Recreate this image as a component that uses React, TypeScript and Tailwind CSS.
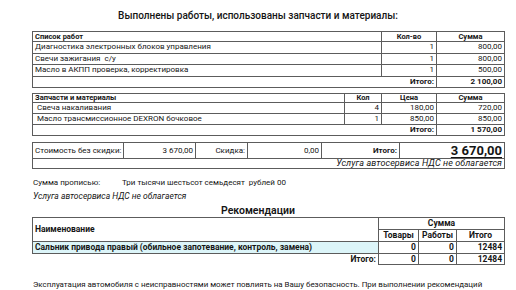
export default function App() {
  const bd = "border border-[#5c5c5c]";
  const td = `${bd} px-[2px] leading-none align-middle whitespace-nowrap overflow-hidden`;
  return (
    <div className="w-[516px] h-[290px] overflow-hidden bg-white text-[#151515] [font-family:Roboto,'Liberation_Sans',sans-serif]">
      <div className="pt-[10px] h-[22px] text-center text-[10px] leading-[12px] font-medium">
        Выполнены работы, использованы запчасти и материалы:
      </div>

      {/* Table 1 */}
      <table className="ml-[32px] mt-[9px] w-[472px] border-collapse table-fixed text-[8px]">
        <colgroup>
          <col className="w-[349px]" />
          <col className="w-[55px]" />
          <col className="w-[68px]" />
        </colgroup>
        <tbody>
          <tr className="h-[10px] text-[7.5px] font-bold">
            <td className={td}>Список работ</td>
            <td className={`${td} text-center`}>Кол-во</td>
            <td className={`${td} text-center`}>Сумма</td>
          </tr>
          {[
            ["Диагностика электронных блоков управления", "1", "800,00"],
            ["Свечи зажигания  с/у", "1", "800,00"],
            ["Масло в АКПП проверка, корректировка", "1", "500,00"],
          ].map((r) => (
            <tr key={r[0]} className="h-[11.5px]">
              <td className={`${td} whitespace-pre`}>{r[0]}</td>
              <td className={`${td} text-right`}>{r[1]}</td>
              <td className={`${td} text-right`}>{r[2]}</td>
            </tr>
          ))}
          <tr className="h-[11.5px] font-bold">
            <td colSpan={2} className={`${td} text-right`}>Итого:</td>
            <td className={`${td} text-right`}>2 100,00</td>
          </tr>
        </tbody>
      </table>

      {/* Table 2 */}
      <table className="ml-[32px] mt-[5px] w-[472px] border-collapse table-fixed text-[8px]">
        <colgroup>
          <col className="w-[312px]" />
          <col className="w-[37px]" />
          <col className="w-[55px]" />
          <col className="w-[68px]" />
        </colgroup>
        <tbody>
          <tr className="h-[9px] text-[7.5px] font-bold">
            <td className={td}>Запчасти и материалы</td>
            <td className={`${td} text-center`}>Кол</td>
            <td className={`${td} text-center`}>Цена</td>
            <td className={`${td} text-center`}>Сумма</td>
          </tr>
          {[
            ["Свеча накаливания", "4", "180,00", "720,00"],
            ["Масло трансмиссионное DEXRON бочковое", "1", "850,00", "850,00"],
          ].map((r) => (
            <tr key={r[0]} className="h-[11px]">
              <td className={`${td} pl-[4px]`}>{r[0]}</td>
              <td className={`${td} text-right`}>{r[1]}</td>
              <td className={`${td} text-right`}>{r[2]}</td>
              <td className={`${td} text-right`}>{r[3]}</td>
            </tr>
          ))}
          <tr className="h-[11px] font-bold">
            <td colSpan={3} className={`${td} text-right`}>Итого:</td>
            <td className={`${td} text-right`}>1 570,00</td>
          </tr>
        </tbody>
      </table>

      {/* Table 3 */}
      <table className="ml-[32px] mt-[6px] w-[472px] border-collapse table-fixed text-[8px]">
        <colgroup>
          <col className="w-[91px]" />
          <col className="w-[72px]" />
          <col className="w-[52px]" />
          <col className="w-[74px]" />
          <col className="w-[78px]" />
          <col className="w-[105px]" />
        </colgroup>
        <tbody>
          <tr className="h-[16px]">
            <td className={`${td} px-[1px]`}>Стоимость без скидки:</td>
            <td className={`${td} text-right`}>3 670,00</td>
            <td className={`${td} text-right`}>Скидка:</td>
            <td className={`${td} text-right`}>0,00</td>
            <td className={`${td} text-right font-bold`}>Итого:</td>
            <td className={`${td} text-right font-bold text-[13px] underline decoration-1 underline-offset-[2px]`}>3 670,00</td>
          </tr>
          <tr className="h-[10px]">
            <td colSpan={6} className={`${td} text-right italic text-[9px] tracking-[0.1px]`}>
              Услуга автосервиса НДС не облагается
            </td>
          </tr>
        </tbody>
      </table>

      <div className="ml-[33px] mt-[8px] h-[12px] flex text-[8px] leading-[12px]">
        <span className="w-[89px]">Сумма прописью:</span>
        <span className="whitespace-pre">Три тысячи шестьсот семьдесят  рублей 00</span>
      </div>
      <div className="ml-[33px] mt-[1px] h-[12px] text-[8.5px] leading-[12px] italic">
        Услуга автосервиса НДС не облагается
      </div>
      <div className="mt-[3px] h-[12px] text-center text-[10.5px] leading-[12px] font-semibold">
        Рекомендации
      </div>

      {/* Table 4 */}
      <table className="ml-[32px] w-[472px] border-collapse table-fixed text-[8.5px] font-bold">
        <colgroup>
          <col className="w-[346px]" />
          <col className="w-[40px]" />
          <col className="w-[38px]" />
          <col className="w-[48px]" />
        </colgroup>
        <tbody>
          <tr className="h-[12px]">
            <td rowSpan={2} className={td}>Наименование</td>
            <td colSpan={3} className={`${td} text-center`}>Сумма</td>
          </tr>
          <tr className="h-[12px]">
            <td className={`${td} text-center`}>Товары</td>
            <td className={`${td} text-center`}>Работы</td>
            <td className={`${td} text-center`}>Итого</td>
          </tr>
          <tr className="h-[12px]">
            <td className={`${td} bg-[#dcf5f9]`}>
              Сальник привода правый (обильное запотевание, контроль, замена)
            </td>
            <td className={`${td} text-right`}>0</td>
            <td className={`${td} text-right`}>0</td>
            <td className={`${td} text-right`}>12484</td>
          </tr>
          <tr className="h-[11px]">
            <td className="px-[2px] leading-none text-right">Итого:</td>
            <td className={`${td} text-right`}>0</td>
            <td className={`${td} text-right`}>0</td>
            <td className={`${td} text-right`}>12484</td>
          </tr>
        </tbody>
      </table>

      <div className="ml-[33px] mt-[14px] h-[12px] text-[7.95px] leading-[12px] whitespace-nowrap">
        Эксплуатация автомобиля с неисправностями может повлиять на Вашу безопасность. При выполнении рекомендаций
      </div>
    </div>
  );
}
